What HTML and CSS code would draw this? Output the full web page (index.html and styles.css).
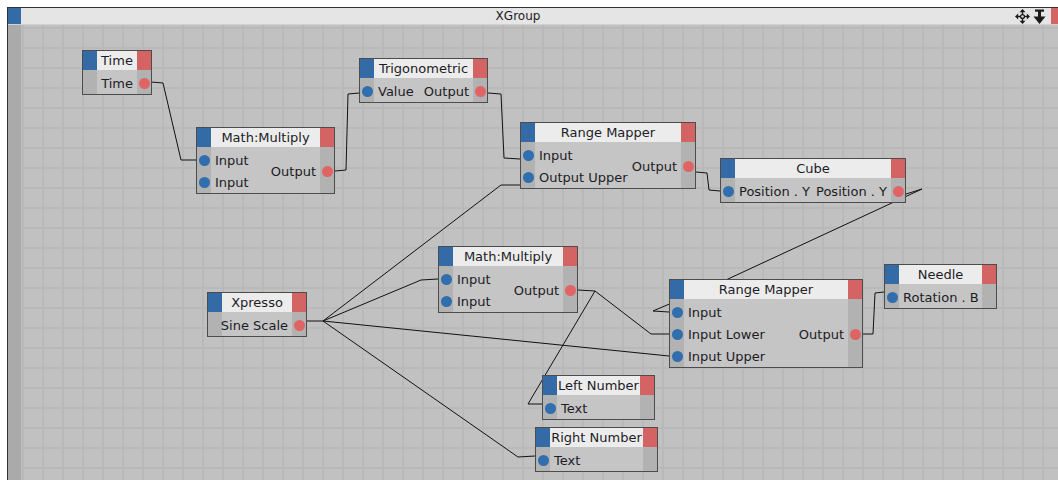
FILE: index.html
```html
<!DOCTYPE html>
<html>
<head>
<meta charset="utf-8">
<title>XGroup</title>
<link rel="stylesheet" href="styles.css">
</head>
<body>
<div class="frame">
  <div class="titlebar">
    <span class="tb-blue"></span>
    <span class="tb-title">XGroup</span>
    <span class="tb-icons">
      <svg width="15" height="15" viewBox="0 0 15 15">
        <g fill="#1a1a1a">
          <polygon points="7.5,0 10.5,3.2 4.5,3.2"/>
          <polygon points="7.5,15 10.5,11.8 4.5,11.8"/>
          <polygon points="0,7.5 3.2,4.5 3.2,10.5"/>
          <polygon points="15,7.5 11.8,4.5 11.8,10.5"/>
          <rect x="6.8" y="2.5" width="1.4" height="10"/>
          <rect x="2.5" y="6.8" width="10" height="1.4"/>
          <circle cx="7.5" cy="7.5" r="2.6"/>
        </g>
        <circle cx="7.5" cy="7.5" r="1.2" fill="#e4e4e4"/>
      </svg>
      <svg width="13" height="15" viewBox="0 0 13 15">
        <g fill="#1a1a1a">
          <rect x="2" y="0.5" width="9" height="2.2"/>
          <rect x="5" y="2" width="3" height="7"/>
          <polygon points="0.5,7.5 12.5,7.5 6.5,15"/>
        </g>
      </svg>
    </span>
    <span class="tb-red"></span>
  </div>
  <div class="content">
    <div class="strip"></div>
    <div class="canvas">
      <svg class="wires" width="1037" height="455" viewBox="0 0 1037 455">
        <g transform="translate(-21,-25)" fill="none" stroke="#111" stroke-width="1">
          <polyline points="150,82 162,83 180,160 195,160"/>
          <polyline points="334,171 345,170 347,94 358,93"/>
          <polyline points="487,93 500,94 503,158 519,159"/>
          <polyline points="695,172 706,173 708,190 719,191"/>
          <polyline points="905,194 921,189 727,279 652,311 668,312"/>
          <polyline points="306,321 322,321 500,185 519,185"/>
          <polyline points="322,321 420,280 437,279"/>
          <polyline points="322,321 668,356"/>
          <polyline points="322,321 517,457 534,456"/>
          <polyline points="577,290 594,291 650,334 668,334"/>
          <polyline points="594,291 527,404 541,404"/>
          <polyline points="862,334 872,334 874,293 883,292"/>
        </g>
      </svg>

      <div class="node" style="left:60px;top:25px;width:70px">
        <div class="head"><span class="hb"></span><span class="ht">Time</span><span class="hr"></span></div>
        <div class="body">
          <div class="ins"></div>
          <div class="outs"><div class="port out"><span class="lbl">Time</span><span class="dc"><i class="dot red"></i></span></div></div>
        </div>
      </div>

      <div class="node" style="left:174px;top:102px;width:139px">
        <div class="head"><span class="hb"></span><span class="ht">Math:Multiply</span><span class="hr"></span></div>
        <div class="body">
          <div class="ins">
            <div class="port in"><span class="dc"><i class="dot blue"></i></span><span class="lbl">Input</span></div>
            <div class="port in"><span class="dc"><i class="dot blue"></i></span><span class="lbl">Input</span></div>
          </div>
          <div class="outs"><div class="port out"><span class="lbl">Output</span><span class="dc"><i class="dot red"></i></span></div></div>
        </div>
      </div>

      <div class="node" style="left:337px;top:33px;width:129px">
        <div class="head"><span class="hb"></span><span class="ht">Trigonometric</span><span class="hr"></span></div>
        <div class="body">
          <div class="ins"><div class="port in"><span class="dc"><i class="dot blue"></i></span><span class="lbl">Value</span></div></div>
          <div class="outs"><div class="port out"><span class="lbl">Output</span><span class="dc"><i class="dot red"></i></span></div></div>
        </div>
      </div>

      <div class="node" style="left:498px;top:97px;width:176px">
        <div class="head"><span class="hb"></span><span class="ht">Range Mapper</span><span class="hr"></span></div>
        <div class="body">
          <div class="ins">
            <div class="port in"><span class="dc"><i class="dot blue"></i></span><span class="lbl">Input</span></div>
            <div class="port in"><span class="dc"><i class="dot blue"></i></span><span class="lbl">Output Upper</span></div>
          </div>
          <div class="outs"><div class="port out"><span class="lbl">Output</span><span class="dc"><i class="dot red"></i></span></div></div>
        </div>
      </div>

      <div class="node" style="left:698px;top:133px;width:186px">
        <div class="head"><span class="hb"></span><span class="ht">Cube</span><span class="hr"></span></div>
        <div class="body">
          <div class="ins"><div class="port in"><span class="dc"><i class="dot blue"></i></span><span class="lbl">Position . Y</span></div></div>
          <div class="outs"><div class="port out"><span class="lbl">Position . Y</span><span class="dc"><i class="dot red"></i></span></div></div>
        </div>
      </div>

      <div class="node" style="left:185px;top:267px;width:100px">
        <div class="head"><span class="hb"></span><span class="ht">Xpresso</span><span class="hr"></span></div>
        <div class="body">
          <div class="ins"></div>
          <div class="outs"><div class="port out"><span class="lbl">Sine Scale</span><span class="dc"><i class="dot red"></i></span></div></div>
        </div>
      </div>

      <div class="node" style="left:416px;top:221px;width:140px">
        <div class="head"><span class="hb"></span><span class="ht">Math:Multiply</span><span class="hr"></span></div>
        <div class="body">
          <div class="ins">
            <div class="port in"><span class="dc"><i class="dot blue"></i></span><span class="lbl">Input</span></div>
            <div class="port in"><span class="dc"><i class="dot blue"></i></span><span class="lbl">Input</span></div>
          </div>
          <div class="outs"><div class="port out"><span class="lbl">Output</span><span class="dc"><i class="dot red"></i></span></div></div>
        </div>
      </div>

      <div class="node" style="left:647px;top:254px;width:194px">
        <div class="head"><span class="hb"></span><span class="ht">Range Mapper</span><span class="hr"></span></div>
        <div class="body">
          <div class="ins">
            <div class="port in"><span class="dc"><i class="dot blue"></i></span><span class="lbl">Input</span></div>
            <div class="port in"><span class="dc"><i class="dot blue"></i></span><span class="lbl">Input Lower</span></div>
            <div class="port in"><span class="dc"><i class="dot blue"></i></span><span class="lbl">Input Upper</span></div>
          </div>
          <div class="outs"><div class="port out"><span class="lbl">Output</span><span class="dc"><i class="dot red"></i></span></div></div>
        </div>
      </div>

      <div class="node" style="left:862px;top:239px;width:113px">
        <div class="head"><span class="hb"></span><span class="ht">Needle</span><span class="hr"></span></div>
        <div class="body">
          <div class="ins"><div class="port in"><span class="dc"><i class="dot blue"></i></span><span class="lbl">Rotation . B</span></div></div>
          <div class="outs"></div>
        </div>
      </div>

      <div class="node" style="left:520px;top:350px;width:113px">
        <div class="head"><span class="hb"></span><span class="ht">Left Number</span><span class="hr"></span></div>
        <div class="body">
          <div class="ins"><div class="port in"><span class="dc"><i class="dot blue"></i></span><span class="lbl">Text</span></div></div>
          <div class="outs"></div>
        </div>
      </div>

      <div class="node" style="left:513px;top:402px;width:123px">
        <div class="head"><span class="hb"></span><span class="ht">Right Number</span><span class="hr"></span></div>
        <div class="body">
          <div class="ins"><div class="port in"><span class="dc"><i class="dot blue"></i></span><span class="lbl">Text</span></div></div>
          <div class="outs"></div>
        </div>
      </div>
    </div>
  </div>
</div>
</body>
</html>
```

FILE: styles.css
```css
html, body {
  margin: 0;
  padding: 0;
  background: #ffffff;
  overflow: hidden;
}
body {
  width: 1058px;
  height: 480px;
  font-family: "DejaVu Sans", "Liberation Sans", sans-serif;
  font-size: 13px;
  color: #1c1c26;
}
.frame {
  margin: 7px 0 0 7px;
  height: 473px;
  border-left: 1px solid #333;
  border-top: 1px solid #333;
  display: flex;
  flex-direction: column;
  box-sizing: border-box;
}
.titlebar {
  height: 17px;
  flex: none;
  display: flex;
  align-items: stretch;
  background: #e5e5e5;
  border-bottom: 1px solid #d2d2d2;
  box-sizing: border-box;
}
.tb-blue {
  width: 13px;
  background: #346aa6;
}
.tb-title {
  flex: 1;
  text-align: center;
  line-height: 16px;
  font-size: 12px;
}
.tb-icons {
  display: flex;
  align-items: center;
  gap: 3px;
  padding-right: 5px;
}
.tb-icons svg { display: block; }
.tb-red {
  width: 7px;
  background: #d46464;
}
.content {
  flex: 1;
  display: flex;
  min-height: 0;
}
.strip {
  width: 13px;
  flex: none;
  background: #aaaaaa;
  border-right: 1px solid #bdbdbd;
}
.canvas {
  flex: 1;
  position: relative;
  overflow: hidden;
  background-color: #c1c1c1;
  background-image:
    linear-gradient(to right, #b9b9b9 2px, transparent 2px),
    linear-gradient(to bottom, #b9b9b9 2px, transparent 2px);
  background-size: 20px 20px;
  background-position: 0px 2px;
}
.wires {
  position: absolute;
  left: 0;
  top: 0;
  z-index: 0;
  pointer-events: none;
}
.node {
  position: absolute;
  z-index: 1;
  border: 1px solid #4c4c4c;
  box-sizing: border-box;
  background: #c4c4c4;
}
.head {
  display: flex;
  height: 19px;
}
.hb {
  width: 14px;
  flex: none;
  background: #346aa6;
}
.hr {
  width: 14px;
  flex: none;
  background: #d46464;
}
.ht {
  flex: 1;
  background: #ececec;
  text-align: center;
  line-height: 20px;
  white-space: nowrap;
  overflow: hidden;
}
.body {
  display: flex;
  justify-content: space-between;
  align-items: center;
  padding: 2px 0 0;
  background:
    linear-gradient(to right, #b2b2b2 14px, transparent 14px),
    linear-gradient(to left, #b2b2b2 14px, #c5c5c5 14px);
}
.ins, .outs {
  display: flex;
  flex-direction: column;
}
.port {
  display: flex;
  align-items: center;
  height: 22px;
  white-space: nowrap;
}
.port.in .lbl { padding-left: 4px; }
.port.out .lbl { padding-right: 4px; }
.dc {
  width: 14px;
  display: flex;
  justify-content: center;
  align-items: center;
}
.dot {
  display: block;
  width: 11px;
  height: 11px;
  border-radius: 50%;
}
.dot.blue { background: #306eae; }
.dot.red { background: #e06464; }
```
